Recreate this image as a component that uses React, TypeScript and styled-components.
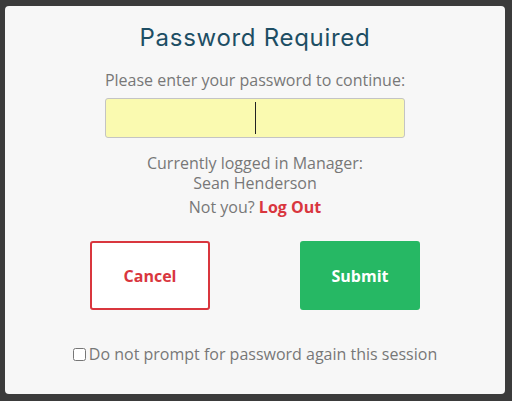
import React from "react"
import styled, { createGlobalStyle } from "styled-components"

const GlobalStyle = createGlobalStyle`
  html, body {
    margin: 0;
    padding: 0;
    background: #3b3b3b;
  }
  body {
    font-family: "Open Sans", "Liberation Sans", sans-serif;
  }
`

const Backdrop = styled.div`
  width: 512px;
  height: 401px;
  padding: 6px 7px 0 5px;
  box-sizing: border-box;
`

const Modal = styled.div`
  width: 500px;
  height: 388px;
  box-sizing: border-box;
  background: #f7f7f7;
  border-radius: 4px;
  padding-top: 17px;
  display: flex;
  flex-direction: column;
  align-items: center;
  color: #777;
  font-size: 16px;
`

const Title = styled.h1`
  margin: 0;
  font-family: Inter, "Noto Sans", sans-serif;
  font-weight: 400;
  font-size: 24px;
  letter-spacing: 0.7px;
  line-height: 30px;
  color: #1d4e64;
`

const Prompt = styled.p`
  margin: 17px 0 8px;
  line-height: 20px;
`

const Field = styled.div`
  width: 300px;
  height: 40px;
  box-sizing: border-box;
  background: #fafab0;
  border: 1px solid #c4c4c4;
  border-radius: 3px;
  display: flex;
  align-items: center;
  justify-content: center;
`

const Caret = styled.span`
  width: 1px;
  height: 32px;
  background: #222;
`

const Info = styled.p`
  margin: ${(p: { $top: number }) => p.$top}px 0 0;
  line-height: 20px;
  text-align: center;
`

const LogOut = styled.a`
  color: #d9363e;
  font-weight: 700;
  text-decoration: none;
`

const Actions = styled.div`
  display: flex;
  gap: 90px;
  margin-top: 24px;
`

const Button = styled.button<{ $primary?: boolean }>`
  width: 120px;
  height: 69px;
  padding-top: 2px;
  box-sizing: border-box;
  border-radius: 3px;
  font-family: inherit;
  font-size: 16px;
  font-weight: 700;
  cursor: pointer;
  border: 2px solid ${p => (p.$primary ? "#26b864" : "#d9363e")};
  background: ${p => (p.$primary ? "#26b864" : "#fff")};
  color: ${p => (p.$primary ? "#fff" : "#d9363e")};
`

const Remember = styled.label`
  margin-top: 34px;
  display: flex;
  align-items: center;
  line-height: 20px;
  input {
    margin: 0 3px 0 0;
    width: 13px;
    height: 13px;
  }
`

export default function App() {
  return (
    <>
      <GlobalStyle />
      <Backdrop>
        <Modal>
          <Title>Password Required</Title>
          <Prompt>Please enter your password to continue:</Prompt>
          <Field>
            <Caret />
          </Field>
          <Info $top={15}>
            Currently logged in Manager:
            <br />
            Sean Henderson
          </Info>
          <Info $top={4}>
            Not you? <LogOut href="#">Log Out</LogOut>
          </Info>
          <Actions>
            <Button>Cancel</Button>
            <Button $primary>Submit</Button>
          </Actions>
          <Remember>
            <input type="checkbox" />
            Do not prompt for password again this session
          </Remember>
        </Modal>
      </Backdrop>
    </>
  )
}
